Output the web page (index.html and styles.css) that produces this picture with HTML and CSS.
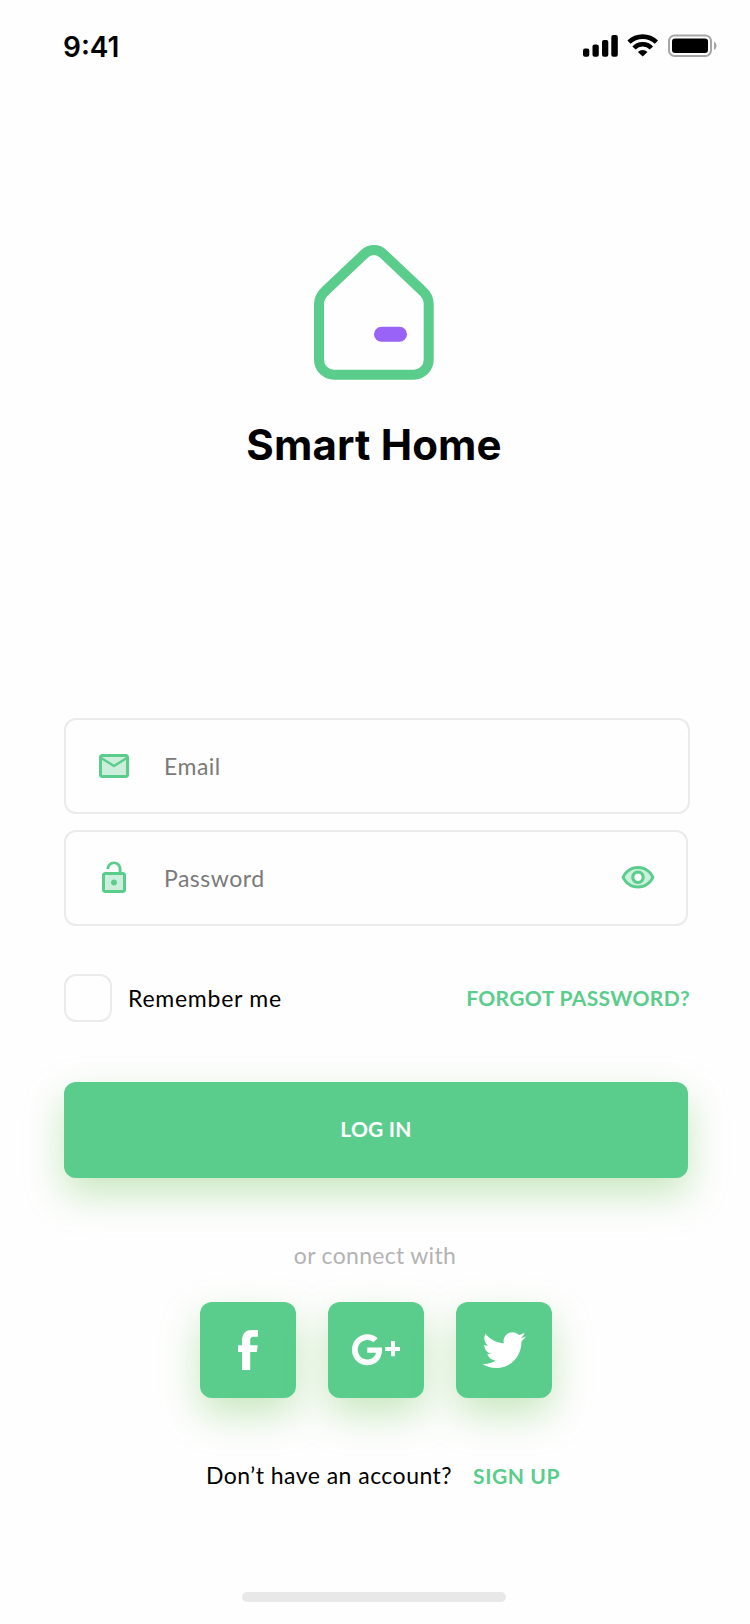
FILE: index.html
```
<!DOCTYPE html>
<html lang="en">
<head>
<meta charset="utf-8">
<title>Smart Home</title>
<link rel="stylesheet" href="styles.css">
</head>
<body>
<main class="screen">
  <header class="status-bar">
    <span class="time">9:41</span>
    <svg class="status-icons" width="136" height="24" viewBox="0 0 136 24">
      <rect x="1" y="14.5" width="6.3" height="8.3" rx="2"/>
      <rect x="10.5" y="10.5" width="6.3" height="12.3" rx="2"/>
      <rect x="20" y="6" width="6.3" height="16.8" rx="2"/>
      <rect x="29.3" y="1" width="6.5" height="21.8" rx="2"/>
      <path class="wifi-arc" d="M47 8.2a19.5 19.5 0 0 1 27.4 0M52 14a12 12 0 0 1 17.4 0"/>
      <path d="M60.7 22.6l-4.8-4.6a7 7 0 0 1 9.6 0z"/>
      <rect class="battery-case" x="87" y="1.5" width="42" height="20.5" rx="5.5"/>
      <rect x="90" y="4.6" width="36" height="14.4" rx="3"/>
      <path class="battery-tip" d="M132 7.8c3.4 1.6 3.4 6.6 0 8.2z"/>
    </svg>
  </header>

  <section class="brand">
    <svg class="logo" width="120" height="135" viewBox="0 0 120 135">
      <path class="logo-house" d="M5 59C5 54 8 49 11.8 45.5L50.3 9C56 3.8 64 3.8 69.4 9L108 45.5C112 49 114.7 54 114.7 59V114.7a15 15 0 0 1-15 15H20a15 15 0 0 1-15-15Z"/>
      <rect class="logo-door" x="60" y="81.7" width="33" height="15" rx="7.5"/>
    </svg>
    <h1 class="brand-name">Smart Home</h1>
  </section>

  <form class="login">
    <label class="field field-email">
      <svg class="icon" viewBox="0 0 24 24"><path opacity=".3" d="M20 8l-8 5-8-5v10h16zm0-2H4l8 4.99z"/><path d="M20 4H4c-1.1 0-2 .9-2 2v12c0 1.1.9 2 2 2h16c1.1 0 2-.9 2-2V6c0-1.1-.9-2-2-2zm0 2l-8 5-8-5h16zm0 12H4V8l8 5 8-5v10z"/></svg>
      <span class="placeholder">Email</span>
    </label>
    <label class="field">
      <svg class="icon" viewBox="0 0 24 24"><path opacity=".3" d="M6 20h12V10H6z"/><path d="M12 17c1.1 0 2-.9 2-2s-.9-2-2-2-2 .9-2 2 .9 2 2 2zm6-9h-1V6c0-2.76-2.24-5-5-5S7 3.24 7 6h1.9c0-1.71 1.39-3.1 3.1-3.1 1.71 0 3.1 1.39 3.1 3.1v2H6c-1.1 0-2 .9-2 2v10c0 1.1.9 2 2 2h12c1.1 0 2-.9 2-2V10c0-1.1-.9-2-2-2zm0 12H6V10h12v10z"/></svg>
      <span class="placeholder">Password</span>
      <svg class="icon icon-eye" viewBox="0 0 24 24"><path opacity=".3" d="M12 6c-3.79 0-7.17 2.13-8.82 5.5C4.83 14.87 8.21 17 12 17s7.17-2.13 8.82-5.5C19.17 8.13 15.79 6 12 6zm0 3a2.5 2.5 0 1 1 0 5 2.5 2.5 0 0 1 0-5z"/><path d="M12 4C7 4 2.73 7.11 1 11.5 2.73 15.89 7 19 12 19s9.27-3.11 11-7.5C21.27 7.11 17 4 12 4zm0 13c-3.79 0-7.17-2.13-8.82-5.5C4.83 8.13 8.21 6 12 6s7.17 2.13 8.82 5.5C19.17 14.87 15.79 17 12 17zm0-10c-2.48 0-4.5 2.02-4.5 4.5S9.52 16 12 16s4.5-2.02 4.5-4.5S14.48 7 12 7zm0 7c-1.38 0-2.5-1.12-2.5-2.5S10.62 9 12 9s2.5 1.12 2.5 2.5S13.38 14 12 14z"/></svg>
    </label>
    <div class="options">
      <span class="checkbox"></span>
      <span class="remember">Remember me</span>
      <a class="link forgot">FORGOT PASSWORD?</a>
    </div>
    <button class="submit" type="button">LOG IN</button>
  </form>

  <p class="connect">or connect with</p>
  <nav class="social">
    <a class="social-button"><svg viewBox="0 0 96 96"><path d="M42 68V50H38V43.3H42V39C42 31 46 28 52 28H58V34.7H54C51 34.7 50.2 36 50.2 38.5V43.3H57.8L56.8 50H50.2V68Z"/></svg></a>
    <a class="social-button"><svg viewBox="0 0 96 96"><path transform="translate(22.9 27) scale(.08 .081)" d="M386.061 228.496c1.834 9.692 3.143 19.384 3.143 31.956C389.204 370.205 315.599 448 204.8 448c-106.084 0-192-85.915-192-192s85.916-192 192-192c51.864 0 95.083 18.859 128.611 50.292l-52.126 50.03c-14.145-13.621-39.028-29.599-76.485-29.599-65.484 0-118.92 54.221-118.92 121.277 0 67.056 53.436 121.277 118.92 121.277 75.961 0 104.513-54.745 108.965-82.773H204.8v-66.009h181.261z"/><path d="M63 39h4v6h5v3.9h-5v5.4h-4v-5.4h-5.7V45H63z"/></svg></a>
    <a class="social-button"><svg viewBox="0 0 96 96"><path transform="translate(26.5 26) scale(1.81 1.84)" d="M23.954 4.569c-.885.389-1.83.654-2.825.775 1.014-.611 1.794-1.574 2.163-2.723-.951.555-2.005.959-3.127 1.184-.896-.959-2.173-1.559-3.591-1.559-2.717 0-4.92 2.203-4.92 4.917 0 .39.045.765.127 1.124C7.691 8.094 4.066 6.13 1.64 3.161c-.427.722-.666 1.561-.666 2.475 0 1.71.87 3.213 2.188 4.096-.807-.026-1.566-.248-2.228-.616v.061c0 2.385 1.693 4.374 3.946 4.827-.413.111-.849.171-1.296.171-.314 0-.615-.03-.916-.086.631 1.953 2.445 3.377 4.604 3.417-1.68 1.319-3.809 2.105-6.102 2.105-.39 0-.779-.023-1.17-.067 2.189 1.394 4.768 2.209 7.557 2.209 9.054 0 13.999-7.496 13.999-13.986 0-.209 0-.42-.015-.63.961-.689 1.8-1.56 2.46-2.548z"/></svg></a>
  </nav>

  <p class="signup"><span class="question">Don’t have an account?</span><a class="link link-signup">SIGN UP</a></p>
  <div class="home-indicator"></div>
</main>
</body>
</html>
```
FILE: styles.css
```
* { box-sizing: border-box; }
body { margin: 0; background: #fefefe; font-family: Lato, "Open Sans", sans-serif; color: #000; }
.screen { width: 750px; height: 1624px; display: flex; flex-direction: column; overflow: hidden; }

.status-bar { height: 80px; padding: 33px 32px 0 63px; display: flex; justify-content: space-between; align-items: flex-start; }
.status-icons { margin-top: 1px; }
.time { font: 600 28px/28px Inter, sans-serif; }
.wifi-arc { fill: none; stroke: #000; stroke-width: 4.6; }
.battery-case { fill: none; stroke: #a6a6a6; stroke-width: 2; }
.battery-tip { fill: #a6a6a6; }

.brand { height: 638px; padding: 165px 2px 0 0; display: flex; flex-direction: column; align-items: center; }
.logo { flex: none; }
.logo-house { fill: none; stroke: #5acd8c; stroke-width: 10; }
.logo-door { fill: #9963f7; }
.brand-name { margin: 40px 0 0; font: 700 42px/50px Inter, sans-serif; letter-spacing: .15px; }

.login { display: flex; flex-direction: column; padding-left: 64px; }
.field { width: 624px; height: 96px; margin-bottom: 16px; padding: 0 30px; border: 2px solid #ebebeb; border-radius: 12px; display: flex; align-items: center; }
.field-email { width: 626px; }
.icon { width: 36px; height: 36px; fill: #5acd8c; flex: none; }
.icon-eye { margin-left: auto; }
.placeholder { margin-left: 32px; padding-bottom: 1px; font-size: 23px; letter-spacing: .5px; color: #7a7a7a; }
.options { height: 48px; width: 626px; margin-top: 32px; display: flex; align-items: center; }
.checkbox { width: 48px; height: 48px; border: 2px solid #ebebeb; border-radius: 12px; }
.remember { margin-left: 16px; padding-bottom: 1px; font-size: 23px; letter-spacing: .75px; }
.link { color: #5acd8c; font-weight: 700; font-size: 21px; letter-spacing: .36px; }
.forgot { margin-left: auto; padding-bottom: 1px; }
.submit { width: 624px; height: 96px; margin-top: 60px; padding-bottom: 3px; border: 0; border-radius: 12px; background: #5acd8c; color: #fff; font: 700 21px/28px Lato, sans-serif; letter-spacing: .2px; box-shadow: 0 16px 38px rgba(102, 190, 78, .36); }

.connect { height: 32px; margin: 61px 0 0; text-align: center; font-size: 23px; line-height: 32px; letter-spacing: .3px; color: #b3b3b3; }
.social { margin: 31px 0 0 200px; display: flex; gap: 32px; }
.social-button { width: 96px; height: 96px; border-radius: 12px; background: #5acd8c; fill: #fff; box-shadow: 0 16px 38px rgba(102, 190, 78, .36); }
.social-button svg { display: block; }
.signup { height: 32px; margin: 61px 0 0 206px; display: flex; gap: 21px; align-items: baseline; font-size: 23px; line-height: 32px; }
.question { letter-spacing: .47px; }
.link-signup { letter-spacing: .6px; }
.home-indicator { width: 264px; height: 10px; margin: 101px 0 0 242px; border-radius: 5px; background: #e8e8e8; }
```
